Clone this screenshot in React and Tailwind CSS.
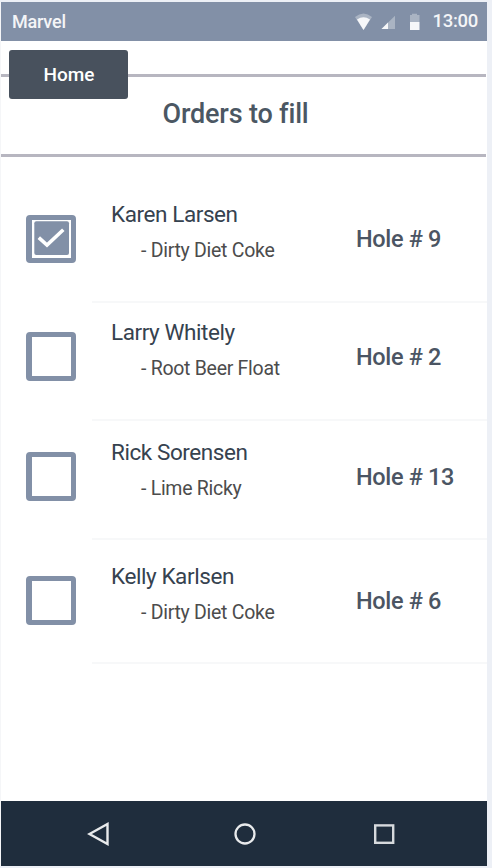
const orders = [
  { name: 'Karen Larsen', item: '- Dirty Diet Coke', hole: 'Hole # 9', filled: true, row: 'h-[146px] pt-[58px]', box: 'h-12', text: '-mt-[15px]', label: 'mt-[9px]' },
  { name: 'Larry Whitely', item: '- Root Beer Float', hole: 'Hole # 2', filled: false, row: 'h-[118px] pt-[29px]', box: 'h-[49px]', text: '-mt-[14px]', label: 'mt-[10px]' },
  { name: 'Rick Sorensen', item: '- Lime Ricky', hole: 'Hole # 13', filled: false, row: 'h-[119px] pt-[31px]', box: 'h-[49px]', text: '-mt-[14px]', label: 'mt-[10px]' },
  { name: 'Kelly Karlsen', item: '- Dirty Diet Coke', hole: 'Hole # 6', filled: false, row: 'h-[124px] pt-[36px]', box: 'h-[49px]', text: '-mt-[14px]', label: 'mt-[10px]' },
];

function Checkbox({ filled, box }) {
  return (
    <div className={`ml-[25px] w-[50px] shrink-0 rounded-[4px] border-[5px] border-l-[6px] border-[#8290a7] bg-white ${box}`}>
      {filled && (
        <svg className="block h-[38px] w-[39px]" viewBox="0 0 39 38">
          <rect x="2.3" y="1.2" width="34.7" height="33.8" rx="2" fill="#8290a7" />
          <path d="M6.8 17.6 L15 25 L31.3 9.8" fill="none" stroke="#fff" strokeWidth="3.6" />
        </svg>
      )}
    </div>
  );
}

function Order({ order }) {
  return (
    <div className={`relative flex ${order.row}`}>
      <Checkbox filled={order.filled} box={order.box} />
      <div className={`ml-[35px] w-[245px] shrink-0 ${order.text}`}>
        <div className="h-[37px] text-[22.5px] leading-[28px] tracking-[-0.42px] text-[#36424f]">{order.name}</div>
        <div className="pl-[30px] text-[19.5px] leading-[28px] tracking-[-0.28px] text-[#4c4c4c]">{order.item}</div>
      </div>
      <div className={`whitespace-nowrap text-[23.5px] font-medium leading-[30px] tracking-[-0.35px] text-[#4b5563] ${order.label}`}>{order.hole}</div>
      <div className="absolute bottom-0 left-[91px] right-0 h-[2px] bg-[#f7f8f9]" />
    </div>
  );
}

export default function App() {
  return (
    <div className="h-[868px] w-[492px] overflow-hidden bg-[#edf0f6] pt-[2px] font-['Roboto',sans-serif]">
      <div className="relative flex h-[864px] w-[487px] flex-col border-l border-[#f5f6f8] bg-white">
        <div className="flex h-[39px] shrink-0 items-center bg-[#8290a7] pl-[11px] pr-[9px] text-[#f4f5f7]">
          <div className="grow text-[18px] font-medium leading-none tracking-[-0.2px]">Marvel</div>
          <svg className="h-[18px] w-[66px]" viewBox="0 0 66 18">
            <path d="M0 4 Q8.5 -3 17 4 L8.5 17 Z" fill="#aab4c3" />
            <path d="M2 6.5 Q8.5 2 15 6.5 L8.5 17 Z" fill="#f6f7f9" />
            <path d="M26.5 16 L40 2.8 V16 Z" fill="#aab4c3" />
            <path d="M26.5 16 L33 9.5 V16 Z" fill="#f6f7f9" />
            <path d="M55 2 H57 V0.8 H62 V2 H64.5 V9 H55 Z" fill="#aab4c3" />
            <path d="M55 9 H64.5 V17 H55 Z" fill="#f6f7f9" />
          </svg>
          <div className="w-[57px] text-right text-[18.5px] font-medium leading-none tracking-[-0.3px]">13:00</div>
        </div>
        <div className="mr-px mt-[33px] flex h-[83px] shrink-0 items-center justify-center border-y-[3px] border-[#b7b6c0] pb-[3px] pr-4">
          <h1 className="text-[27px] font-medium leading-none tracking-[-0.18px] text-[#4b5763]">Orders to fill</h1>
        </div>
        <button className="absolute left-2 top-12 h-[49px] w-[119px] rounded-[3px] bg-[#48515d] pl-px pt-px text-[19px] font-medium text-white">Home</button>
        <div className="grow">
          {orders.map((order) => <Order key={order.name} order={order} />)}
        </div>
        <div className="flex h-[65px] shrink-0 items-center bg-[#1f2d3d]">
          <svg className="ml-[86px] h-6 w-6" viewBox="0 0 24 24" fill="none" stroke="#e8eaec" strokeWidth="2.4">
            <path d="M2.5 12 L20.5 2 V22 Z" />
          </svg>
          <svg className="ml-[122px] h-6 w-6" viewBox="0 0 24 24" fill="none" stroke="#e8eaec" strokeWidth="2.3">
            <circle cx="12" cy="12" r="9.5" />
          </svg>
          <svg className="ml-[115px] h-6 w-6" viewBox="0 0 24 24" fill="none" stroke="#d6d9dd" strokeWidth="2.4">
            <rect x="3.2" y="3.4" width="18" height="17.4" />
          </svg>
        </div>
      </div>
    </div>
  );
}
